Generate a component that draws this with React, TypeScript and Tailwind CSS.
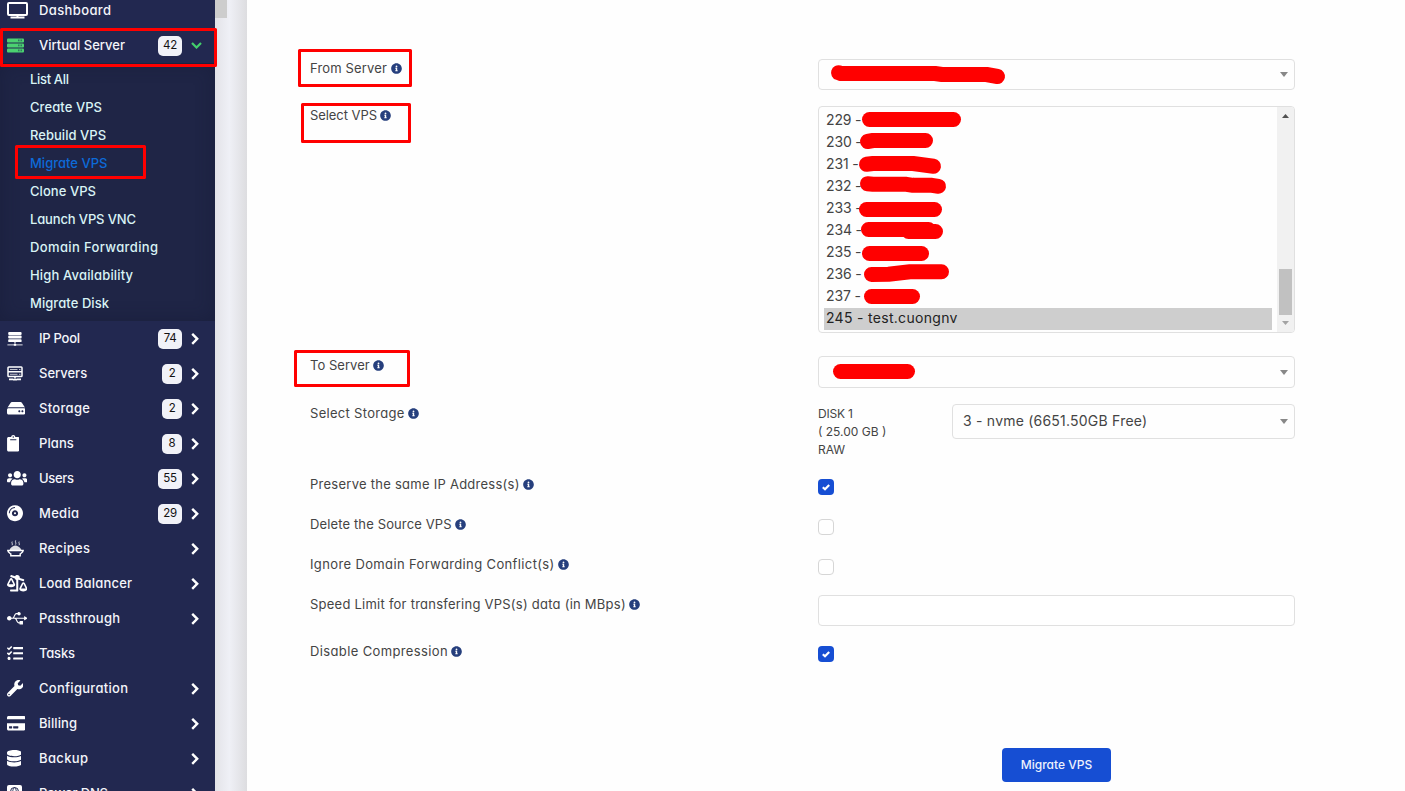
import type { ReactNode } from "react";
import {
  FaBalanceScaleRight, FaClipboard, FaCompactDisc, FaCreditCard, FaDatabase, FaHdd,
  FaInfoCircle, FaTasks, FaUsb, FaUsers, FaWrench,
} from "react-icons/fa";

function MonitorIcon() {
  return (
    <svg className="h-[17px] w-[21px]" viewBox="0 0 21 17" fill="none" stroke="currentColor" strokeWidth="2">
      <rect x="1" y="1" width="19" height="12" rx="1" />
      <path d="M10.5 13v2M3.5 15.500h14" />
    </svg>
  );
}

function VirtualServerIcon() {
  return (
    <svg className="h-[15px] w-[17px] text-[#4bd171]" viewBox="0 0 17 15" fill="currentColor">
      <rect x="0" y="0.4" width="17" height="4" rx="1" />
      <rect x="0" y="5.4" width="17" height="4" rx="1" />
      <rect x="0" y="10.4" width="17" height="4" rx="1" />
      <path
        d="M11 2.4h1.5M13.5 2.4H15M11 7.4h1.5M13.5 7.4H15M11 12.4h1.5M13.5 12.4H15"
        stroke="#222850"
        strokeOpacity="0.55"
        strokeWidth="1.6"
      />
    </svg>
  );
}

function PoolIcon() {
  return (
    <svg className="ml-[0.5px] h-[14px] w-[16px]" viewBox="0 0 16 14" fill="currentColor">
      <rect x="1.2" y="0" width="13.4" height="2.9" rx="0.9" />
      <rect x="1.2" y="3.6" width="13.4" height="2.9" rx="0.9" />
      <rect x="1.2" y="7.2" width="13.4" height="2.9" rx="0.9" />
      <path d="M7.3 10h1.4v1.6H7.3z" opacity="0.8" />
      <rect x="0.4" y="12.200" width="15.2" height="1.3" opacity="0.65" />
      <rect x="6.800" y="11.8" width="2.400" height="2" rx="0.6" />
    </svg>
  );
}

function HostIcon() {
  return (
    <svg className="ml-[0.5px] h-[15px] w-[16px]" viewBox="0 0 16 15" fill="none" stroke="currentColor" strokeWidth="1.5">
      <rect x="1" y="1" width="14" height="9.6" rx="0.8" />
      <path d="M1 5.8h14M8 10.6v2" />
      <path d="M3 3.500h7.500M3 8.300h7.500M12 3.500h1.500M12 8.300h1.500" strokeWidth="1" opacity="0.7" />
      <path d="M2 13.4h4M10 13.4h4M6 13.600h4" strokeWidth="1.6" />
    </svg>
  );
}

function BowlIcon() {
  return (
    <svg className="h-[17px] w-[17px]" viewBox="0 0 17 17" fill="none" stroke="currentColor">
      <path d="M5.2 1.6c-.9 1.2.8 2-.1 3.6M8.7.4c-.9 1.4.8 2.4-.1 4.2M12.2 1.6c-.9 1.2.8 2-.1 3.6" strokeWidth="1" opacity="0.8" />
      <path d="M2.600 10C3.2 7.4 5.2 7 6 6.2c1.400-1 3.400-1 4.800 0 1 .8 2.800 1.200 3.600 3.800z" fill="currentColor" stroke="none" opacity="0.85" />
      <path d="M.8 10.500h15.400c0 1.600-1.600 2.400-3 3.400v1.900H3.800v-1.900c-1.400-1-3-1.800-3-3.400z" strokeWidth="1.400" />
    </svg>
  );
}

function GlobeBookIcon() {
  return (
    <svg className="h-[17px] w-[15px]" viewBox="0 0 15 17">
      <rect width="15" height="17" rx="2" fill="currentColor" />
      <g fill="none" stroke="#222850" strokeWidth="1">
        <circle cx="7.500" cy="6.500" r="4" />
        <path d="M3.500 6.500h8M7.500 2.500c-2.400 2.400-2.400 5.600 0 8M7.500 2.500c2.400 2.400 2.400 5.600 0 8M4 13.500h7" />
      </g>
    </svg>
  );
}

function Chevron({ open }: { open?: boolean }) {
  return open ? (
    <svg className="h-[7px] w-[11px] text-[#43cf6b]" viewBox="0 0 11 7" fill="none" stroke="currentColor" strokeWidth="2.2">
      <path d="M1 1l4.500 4.500L10 1" />
    </svg>
  ) : (
    <svg className="h-[12px] w-[8px]" viewBox="0 0 8 12" fill="none" stroke="currentColor" strokeWidth="2.400">
      <path d="M1.200 .8l5 5-5 5" />
    </svg>
  );
}

type NavEntry = { label: string; tracking: string; icon: ReactNode; count?: string; leaf?: boolean };

const lowerNav: NavEntry[] = [
  { label: "IP Pool", tracking: "tracking-[-0.25px]", icon: <PoolIcon />, count: "74" },
  { label: "Servers", tracking: "tracking-normal", icon: <HostIcon />, count: "2" },
  { label: "Storage", tracking: "tracking-[0.32px]", icon: <FaHdd className="h-[16.5px] w-[18.5px]" />, count: "2" },
  { label: "Plans", tracking: "tracking-[0.1px]", icon: <FaClipboard className="h-[16.5px] w-[12.5px]" />, count: "8" },
  { label: "Users", tracking: "tracking-[-0.3px]", icon: <FaUsers className="h-[16.5px] w-[20.5px]" />, count: "55" },
  { label: "Media", tracking: "tracking-[0.29px]", icon: <FaCompactDisc className="h-[16.5px] w-[16px]" />, count: "29" },
  { label: "Recipes", tracking: "tracking-[0.28px]", icon: <BowlIcon /> },
  { label: "Load Balancer", tracking: "tracking-[0.2px]", icon: <FaBalanceScaleRight className="h-[16.5px] w-[20.5px]" /> },
  { label: "Passthrough", tracking: "tracking-[0.21px]", icon: <FaUsb className="h-[16.5px] w-[20.5px]" /> },
  { label: "Tasks", tracking: "tracking-[-0.2px]", icon: <FaTasks className="h-[16.5px] w-[16.5px]" />, leaf: true },
  { label: "Configuration", tracking: "tracking-[0.29px]", icon: <FaWrench className="h-[16.5px] w-[16.5px]" /> },
  { label: "Billing", tracking: "tracking-[0.08px]", icon: <FaCreditCard className="h-[16.5px] w-[18.5px]" /> },
  { label: "Backup", tracking: "tracking-[0.36px]", icon: <FaDatabase className="h-[16.5px] w-[14.5px]" /> },
  { label: "Power DNS", tracking: "tracking-[-0.15px]", icon: <GlobeBookIcon /> },
];

const subNav = [
  { label: "List All", tracking: "tracking-[-0.33px]" },
  { label: "Create VPS", tracking: "tracking-[0.07px]" },
  { label: "Rebuild VPS", tracking: "tracking-[0.03px]" },
  { label: "Migrate VPS", tracking: "tracking-normal", active: true },
  { label: "Clone VPS", tracking: "tracking-[0.06px]" },
  { label: "Launch VPS VNC", tracking: "tracking-[-0.14px]" },
  { label: "Domain Forwarding", tracking: "tracking-[0.37px]" },
  { label: "High Availability", tracking: "tracking-[0.16px]" },
  { label: "Migrate Disk", tracking: "tracking-[0.06px]" },
];

function NavRow({ label, tracking, icon, count, leaf, open }: NavEntry & { open?: boolean }) {
  return (
    <div className="flex h-[35px] shrink-0 items-center pl-[6.5px] text-white">
      <span className="flex w-[32.5px] shrink-0 items-center">{icon}</span>
      <span className={`flex-1 whitespace-nowrap pb-0.5 text-[13px] font-medium leading-5 text-[#f4f5fa] ${tracking}`}>{label}</span>
      {count && (
        <span
          className={`flex h-5 items-center justify-center rounded-[5px] bg-[#f1f2f8] text-[11.5px] tracking-[-0.3px] text-[#111] ${
            count.length > 1 ? "w-6" : "w-5"
          }`}
        >
          {count}
        </span>
      )}
      <span className="ml-[9px] flex w-6 shrink-0">{!leaf && <Chevron open={open} />}</span>
    </div>
  );
}

function Sidebar() {
  return (
    <nav className="flex h-full w-[215px] shrink-0 flex-col overflow-hidden bg-[#222850]">
      <div className="-mt-[7px] shrink-0">
        <NavRow label="Dashboard" tracking="tracking-[0.38px]" icon={<MonitorIcon />} leaf />
      </div>
      <NavRow label="Virtual Server" tracking="tracking-normal" icon={<VirtualServerIcon />} count="42" open />
      <ul className="h-[258px] shrink-0 bg-[#1f2546] pt-[3px] shadow-[inset_0_0_18px_rgba(20,24,50,0.45)]">
        {subNav.map((s) => (
          <li
            key={s.label}
            className={`flex h-7 items-center pl-[30px] text-[13px] font-medium ${s.tracking} ${
              s.active ? "text-[#0d6ad8]" : "text-[#d9f3f5]"
            }`}
          >
            {s.label}
          </li>
        ))}
      </ul>
      {lowerNav.map((n) => (
        <NavRow key={n.label} {...n} />
      ))}
    </nav>
  );
}

function Field({ label, tracking, height, children }: { label: string; tracking: string; height: string; children: ReactNode }) {
  return (
    <div className={`flex shrink-0 ${height}`}>
      <div className="flex h-5 w-[508px] shrink-0 items-center gap-[3.5px] whitespace-nowrap text-[13px]">
        <span className={tracking}>{label}</span>
        <FaInfoCircle className="mb-[2px] size-[11px] text-[#263f7d]" />
      </div>
      <div className="w-[477px]">{children}</div>
    </div>
  );
}

function SelectBox({ height, text }: { height: string; text?: string }) {
  return (
    <div className={`flex w-full items-center justify-between rounded-[4px] border border-[#e0e0e0] pl-[10px] pr-[6px] ${height}`}>
      <span className="whitespace-nowrap pb-0.5 text-[14px] tracking-[0.22px]">{text}</span>
      <svg className="h-[5px] w-2 shrink-0 text-[#888]" viewBox="0 0 8 5" fill="currentColor">
        <path d="M0 0h8L4 5z" />
      </svg>
    </div>
  );
}

function Checkbox({ checked }: { checked?: boolean }) {
  return (
    <div
      className={`mt-1 flex size-4 items-center justify-center rounded-[4px] ${
        checked ? "bg-[#164ed3] text-white" : "border border-[#d6d6d6] bg-white"
      }`}
    >
      {checked && (
        <svg className="h-[7px] w-2" viewBox="0 0 8 7" fill="none" stroke="currentColor" strokeWidth="2.200">
          <path d="M.8 3.200l2.200 2L7.200 1" />
        </svg>
      )}
    </div>
  );
}

const options = ["229", "230", "231", "232", "233", "234", "235", "236", "237"];

function VpsList() {
  return (
    <div className="flex h-[227px] overflow-hidden rounded-[4px] border border-[#e0e0e0]">
      <ul className="flex-1 py-[3px] pl-[5px] pr-[5px] text-[14px]">
        {options.map((o) => (
          <li key={o} className="flex h-[22px] items-center whitespace-pre pb-[3px] pl-0.5 tracking-[-0.15px]">
            {o + " -"}
          </li>
        ))}
        <li className="flex h-[22px] items-center bg-[#cecece] pb-[3px] pl-0.5 tracking-[0.3px] text-[#222]">245 - test.cuongnv</li>
      </ul>
      <div className="flex w-[17px] flex-col items-center bg-[#f1f1f1] pr-px pt-[7px]">
        <svg className="h-1 w-[7px] shrink-0 text-[#505050]" viewBox="0 0 7 4" fill="currentColor">
          <path d="M0 4h7L3.500 0z" />
        </svg>
        <div className="mt-[151px] h-[46px] w-[13px] shrink-0 bg-[#c1c1c1]" />
        <svg className="mt-[6px] h-1 w-[7px] shrink-0 text-[#a3a3a3]" viewBox="0 0 7 4" fill="currentColor">
          <path d="M0 0h7L3.500 4z" />
        </svg>
      </div>
    </div>
  );
}

function Annotations() {
  return (
    <svg
      className="pointer-events-none absolute left-0 top-0 h-[791px] w-[1405px]"
      viewBox="0 0 1405 791"
      fill="none"
      stroke="#ff0000"
      strokeLinecap="round"
      strokeLinejoin="round"
    >
      <g strokeWidth="3">
        <rect x="1.500" y="29.500" width="214" height="36" />
        <rect x="16.500" y="146.500" width="128" height="31" />
        <rect x="299.500" y="50.500" width="111" height="35" />
        <rect x="302.500" y="104.500" width="107" height="37" />
        <rect x="295.500" y="351.500" width="113" height="34" />
      </g>
      <g strokeWidth="15">
        <path d="M838.500 72.700L841 73.500H935L942 74.500H986.500L997.500 76.500" />
        <path d="M869.500 119.500H953.500" />
        <path d="M867.500 141.500L873 140.500H925.500" />
        <path d="M866.500 164.300L873 163.500H913L933.500 166.300" />
        <path d="M867.500 183.700L873 184.300H906.500L913 185.300H932L938.500 186.300" />
        <path d="M866.500 209.500H934.500" />
        <path d="M868.500 229.500H928.500M908.500 231.500H935.500" />
        <path d="M869.500 253.500H921.500" />
        <path d="M871.500 274.500L888.500 274.300L910 271.800H941.500" />
        <path d="M871.500 296.500H912.500" />
        <path d="M840.500 371.500H907.500" />
      </g>
    </svg>
  );
}

export default function App() {
  return (
    <div className="relative flex h-[791px] w-[1405px] overflow-hidden font-['Inter',sans-serif] text-[#444] [font-feature-settings:'cv11']">
      <Sidebar />
      <div className="flex w-8 shrink-0 bg-linear-to-r from-[#e3e3e8] from-0% via-[#eff0f6] via-45% to-[#dddde0]">
        <div className="h-[18px] w-3 bg-[#cdcdcd]" />
      </div>
      <main className="flex flex-1 flex-col bg-[#fefefe] pl-[63px] pt-[59px]">
        <Field label="From Server" tracking="tracking-[0.16px]" height="h-[47px]">
          <SelectBox height="h-[31px]" />
        </Field>
        <Field label="Select VPS" tracking="tracking-[-0.07px]" height="h-[250px]">
          <VpsList />
        </Field>
        <Field label="To Server" tracking="tracking-[0.04px]" height="h-[48px]">
          <SelectBox height="h-[32px]" />
        </Field>
        <Field label="Select Storage" tracking="tracking-[0.3px]" height="h-[71px]">
          <div className="flex">
            <div className="w-[134px] shrink-0 pt-px text-[12px] leading-[18px]">
              <p className="tracking-[-0.18px]">DISK 1</p>
              <p>( 25.00 GB )</p>
              <p className="tracking-[-0.08px]">RAW</p>
            </div>
            <SelectBox height="h-[35px]" text="3 - nvme (6651.50GB Free)" />
          </div>
        </Field>
        <Field label="Preserve the same IP Address(s)" tracking="tracking-[0.26px]" height="h-[40px]">
          <Checkbox checked />
        </Field>
        <Field label="Delete the Source VPS" tracking="tracking-[0.13px]" height="h-[40px]">
          <Checkbox />
        </Field>
        <Field label="Ignore Domain Forwarding Conflict(s)" tracking="tracking-[0.37px]" height="h-[40px]">
          <Checkbox />
        </Field>
        <Field label="Speed Limit for transfering VPS(s) data (in MBps)" tracking="tracking-[0.24px]" height="h-[47px]">
          <input className="block h-[31px] w-full rounded-[4px] border border-[#e0e0e0] bg-white px-2 text-sm" />
        </Field>
        <Field label="Disable Compression" tracking="tracking-[0.37px]" height="h-[106px]">
          <Checkbox checked />
        </Field>
        <div className="flex w-[985px] pl-[692px]">
          <button className="h-[34px] w-[109px] rounded-[4px] bg-[#164ed3] text-[12px] font-medium text-[#eef2fd] [font-feature-settings:'cv11']">
            Migrate VPS
          </button>
        </div>
      </main>
      <Annotations />
    </div>
  );
}
